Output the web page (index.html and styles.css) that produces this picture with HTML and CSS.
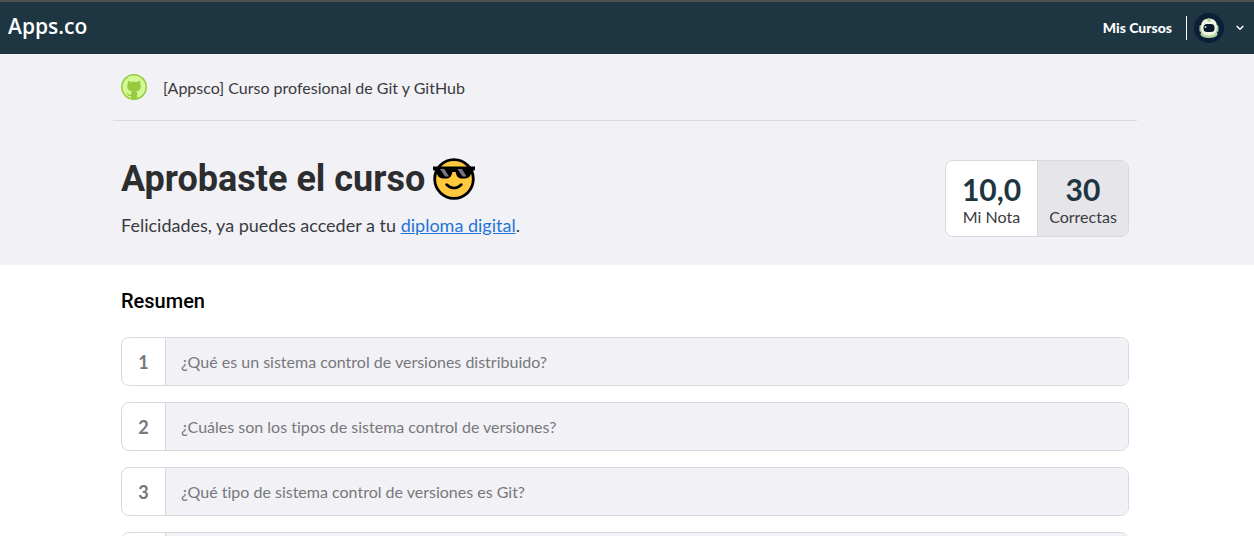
FILE: index.html
```html
<!DOCTYPE html>
<html lang="es">
<head>
<meta charset="utf-8">
<meta name="viewport" content="width=device-width, initial-scale=1">
<title>Aprobaste el curso</title>
<link rel="stylesheet" href="styles.css">
</head>
<body>
<header class="topbar">
  <a class="brand" href="#">Apps.co</a>
  <nav class="topnav">
    <a class="topnav-link" href="#">Mis Cursos</a>
    <button class="account" type="button" aria-label="Cuenta">
      <svg class="avatar" viewBox="0 0 30 30" aria-hidden="true">
        <circle cx="15" cy="15" r="15" fill="#0b1f37"/>
        <path d="M7 19L6.500 22Q9 25 15 25T23.500 22L23 19Z" fill="#b5d4a4"/>
        <rect x="5.500" y="12" width="3" height="7" rx="1.500" fill="#a9cfa6"/>
        <rect x="21.500" y="12" width="3" height="7" rx="1.500" fill="#a9cfa6"/>
        <path d="M15 5.500C9.500 5.500 7 9 7 14C7 19.500 9.500 22.500 15 22.500S23 19.500 23 14C23 9 20.500 5.500 15 5.500Z" fill="#f0f4e2"/>
        <path d="M13.500 5.500H16.500V8.500H13.500Z" fill="#a9cf85"/>
        <rect x="9.500" y="11" width="11" height="8" rx="3.500" fill="#091a2e"/>
        <circle cx="11.500" cy="14" r="1" fill="#b5d5d8"/>
      </svg>
      <svg class="chevron" viewBox="0 0 8 6" aria-hidden="true"><path d="M0.700 1L4 4.300L7.300 1" fill="none" stroke="#fff" stroke-width="1.500"/></svg>
    </button>
  </nav>
</header>
<main>
  <section class="hero">
    <div class="container">
      <div class="course">
        <svg class="course-icon" viewBox="0 0 26 26" aria-hidden="true">
          <circle cx="13" cy="13" r="12.200" fill="#d3f997" stroke="#98ca3f" stroke-width="1.500"/>
          <path d="M7.200 6.800L10 8.100Q13 7.400 16 8.100L18.800 6.800Q19.500 8.300 19.200 9.700Q20 11 19.800 13Q19.500 16.700 15.400 17.200Q16.200 18 16.200 19.500V25Q13 26 10 25V22.300Q7.500 22.600 6.700 20.700Q6.200 19.600 5.300 19.100Q6.700 18.600 7.600 20Q8.500 21.300 10 20.700Q10 18 10.700 17.200Q6.500 16.700 6.200 13Q6 11 6.900 9.700Q6.500 8.200 7.200 6.800Z" fill="#98ca3f"/>
        </svg>
        <span>[Appsco] Curso profesional de Git y GitHub</span>
      </div>
      <div class="result">
        <div>
          <h1 class="result-title">Aprobaste el curso
            <svg class="emoji" viewBox="0 0 42 42" role="img" aria-label="Cara con gafas de sol">
              <circle cx="21" cy="21" r="19.300" fill="#ffc83d" stroke="#000" stroke-width="2.800"/>
              <path d="M0 8.500H42V12L38.500 13.500Q37.500 20.500 32 20.500H28Q24 20.500 22.500 14H19.500Q18 20.500 14 20.500H10Q4.500 20.500 3.500 13.500L0 12Z" fill="#000"/>
              <path d="M7 11H11.500L16 18.500H12Z M24.500 11H29L33.500 18.500H29.500Z" fill="#777580"/>
              <path d="M13.500 26.500Q21 33.500 28.500 26.500" fill="none" stroke="#000" stroke-width="2.500" stroke-linecap="round"/>
            </svg>
          </h1>
          <p class="result-text">Felicidades, ya puedes acceder a tu <a href="#">diploma digital</a>.</p>
        </div>
        <div class="scores">
          <div class="score"><strong>10,0</strong><span>Mi Nota</span></div>
          <div class="score score-alt"><strong>30</strong><span>Correctas</span></div>
        </div>
      </div>
    </div>
  </section>
  <section class="container summary">
    <h2>Resumen</h2>
    <ol class="questions">
      <li><span class="number">1</span><span class="question">¿Qué es un sistema control de versiones distribuido?</span></li>
      <li><span class="number">2</span><span class="question">¿Cuáles son los tipos de sistema control de versiones?</span></li>
      <li><span class="number">3</span><span class="question">¿Qué tipo de sistema control de versiones es Git?</span></li>
      <li><span class="number"></span><span class="question"></span></li>
    </ol>
  </section>
</main>
</body>
</html>
```
FILE: styles.css
```css
* { box-sizing: border-box; }
body, h1, h2, p, ol { margin: 0; padding: 0; }
html { scrollbar-width: none; }
body {
  background: #fff;
  color: #3a3b3f;
  font-family: Lato, "Liberation Sans", sans-serif;
  font-size: 16px;
  font-variant-ligatures: none;
  line-height: 24px;
}
.topbar {
  display: flex;
  align-items: center;
  justify-content: space-between;
  height: 54px;
  padding: 0 8px;
  border-top: 2px solid #505252;
  background: #1e3542;
}
.topbar a { color: #fff; text-decoration: none; }
.brand {
  padding-bottom: 4px;
  font: 600 21px/28px "Open Sans", sans-serif;
}
.topnav { display: flex; align-items: center; gap: 14px; }
.topnav-link { font-size: 14px; font-weight: 900; }
.account {
  display: flex;
  align-items: center;
  gap: 12px;
  height: 24px;
  padding: 0 2px 0 7px;
  border: 0;
  border-left: 1px solid #fff;
  background: none;
}
.avatar { width: 30px; height: 30px; }
.chevron { width: 8px; height: 6px; }
main { padding-right: 4px; background: linear-gradient(#f2f1f6, #f2f1f6) right top / 4px 211px no-repeat; }
.hero { background: #f2f1f6; padding-bottom: 28px; }
.container { max-width: 1024px; margin: 0 auto; }
.course {
  display: flex;
  align-items: center;
  gap: 16px;
  height: 67px;
  padding: 0 8px;
  border-bottom: 1px solid #d9d8de;
}
.course-icon { width: 26px; height: 26px; }
.course span { line-height: 22px; padding-top: 2px; }
.result {
  display: flex;
  justify-content: space-between;
  align-items: flex-start;
  padding: 39px 8px 0;
}
.result-title {
  display: flex;
  align-items: center;
  gap: 8px;
  height: 38px;
  color: #2b2d2f;
  font: 700 36px/38px Roboto, sans-serif;
}
.emoji { width: 42px; height: 42px; }
.result-text { margin-top: 16px; font-size: 18px; line-height: 22px; }
.result-text a { color: #1f75d5; }
.scores {
  display: grid;
  grid-template-columns: 1fr 1fr;
  width: 184px;
  overflow: hidden;
  border: 1px solid #d9d8de;
  border-radius: 8px;
}
.score {
  display: flex;
  flex-direction: column;
  align-items: center;
  padding: 11px 0 8px;
  background: #fff;
}
.score strong { color: #1e3542; font-size: 30px; line-height: 34px; }
.score span { line-height: 22px; }
.score-alt { border-left: 1px solid #d9d8de; background: #e6e5ea; }
.summary { padding: 24px 8px; }
.summary h2 { color: #000; font: 500 20px/24px Roboto, sans-serif; }
.questions { display: grid; gap: 16px; margin-top: 24px; list-style: none; }
.questions li {
  display: flex;
  height: 49px;
  overflow: hidden;
  border: 1px solid #d9d8de;
  border-radius: 8px;
  color: #77787c;
}
.number {
  display: grid;
  place-items: center;
  flex: 0 0 44px;
  border-right: 1px solid #d9d8de;
  font-size: 18px;
  font-weight: 700;
}
.question { display: flex; align-items: center; flex: 1; padding: 0 15px; background: #f2f1f6; }
```
